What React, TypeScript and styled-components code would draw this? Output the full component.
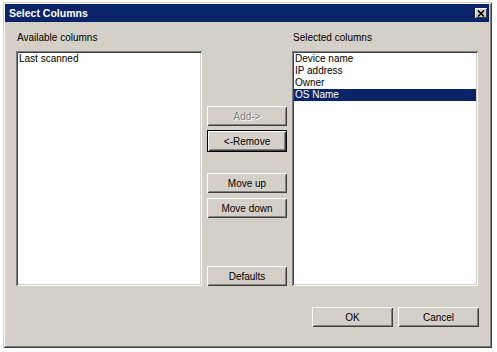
import React from "react";
import styled, { createGlobalStyle, css } from "styled-components";

const Global = createGlobalStyle`
  html, body { margin: 0; padding: 0; background: #ffffff; }
  body { font-family: "Liberation Sans", Arial, sans-serif; font-size: 10px; }
`;

const Window = styled.div`
  box-sizing: border-box;
  margin: 2px 0 0 3px;
  width: 489px;
  height: 346px;
  background: #d4d0c8;
  padding: 2px 3px 2px 2px;
  box-shadow: inset 1px 1px #d4d0c8, inset -1px -1px #404040,
    inset 2px 2px #ffffff, inset -2px -2px #808080;
  display: flex;
  flex-direction: column;
`;

const TitleBar = styled.div`
  height: 18px;
  background: #0a246a;
  display: flex;
  align-items: center;
  justify-content: space-between;
  padding: 0 2px 0 4px;
`;

const TitleText = styled.span`
  color: #ffffff;
  font-weight: bold;
  font-size: 10.5px;
`;

const CloseBtn = styled.div`
  width: 12px;
  height: 10px;
  background: #d4d0c8;
  box-shadow: inset 1px 1px #ffffff, inset -1px -1px #404040;
  display: flex;
  align-items: center;
  justify-content: center;
`;

const Body = styled.div`
  flex: 1;
  display: flex;
  flex-direction: column;
  padding: 10px 10px 18px 11px;
`;

const Columns = styled.div`
  display: grid;
  grid-template-columns: 186px 80px 186px;
  column-gap: 5px;
  grid-template-rows: 12px 235px;
  row-gap: 7px;
`;

const Label = styled.div`
  line-height: 12px;
  color: #000;
  padding-left: 1px;
`;

const ListBox = styled.div`
  background: #ffffff;
  box-shadow: inset 1px 1px #808080, inset -1px -1px #ffffff,
    inset 2px 2px #404040, inset -2px -2px #d4d0c8;
  padding: 2px;
`;

const Item = styled.div<{ $selected?: boolean }>`
  height: 12px;
  line-height: 12px;
  padding-left: 1px;
  color: #000;
  ${(p) =>
    p.$selected &&
    css`
      background: #0a246a;
      color: #ffffff;
    `}
`;

const ButtonCol = styled.div`
  display: flex;
  flex-direction: column;
  padding-top: 55px;
`;

const Button = styled.div<{ $disabled?: boolean; $default?: boolean; $gap?: number }>`
  box-sizing: border-box;
  width: 80px;
  height: 20px;
  display: flex;
  align-items: center;
  justify-content: center;
  background: #d4d0c8;
  color: #000;
  margin-top: ${(p) => p.$gap ?? 0}px;
  box-shadow: inset 1px 1px #ffffff, inset -1px -1px #404040,
    inset 2px 2px #d4d0c8, inset -2px -2px #808080;
  ${(p) =>
    p.$disabled &&
    css`
      color: #808080;
      text-shadow: 1px 1px #ffffff;
    `}
  ${(p) =>
    p.$default &&
    css`
      height: 22px;
      border: 1px solid #000;
      box-shadow: inset 1px 1px #ffffff, inset -1px -1px #404040,
        inset 2px 2px #d4d0c8, inset -2px -2px #808080;
    `}
`;

const DefaultsButton = styled(Button)`
  margin-top: auto;
`;

const Footer = styled.div`
  margin-top: 21px;
  display: flex;
  justify-content: flex-end;
  gap: 5px;
  padding-right: 0px;
`;

const FooterButton = styled(Button)`
  width: 81px;
`;

export default function App() {
  return (
    <>
      <Global />
      <Window>
        <TitleBar>
          <TitleText>Select Columns</TitleText>
          <CloseBtn>
            <svg width="8" height="7" viewBox="0 0 8 7">
              <path d="M1 0.5 L7 6.5 M7 0.5 L1 6.5" stroke="#000" strokeWidth="1.6" />
            </svg>
          </CloseBtn>
        </TitleBar>
        <Body>
          <Columns>
            <Label>Available columns</Label>
            <div />
            <Label>Selected columns</Label>
            <ListBox>
              <Item>Last scanned</Item>
            </ListBox>
            <ButtonCol>
              <Button $disabled>Add-&gt;</Button>
              <Button $default $gap={4}>&lt;-Remove</Button>
              <Button $gap={21}>Move up</Button>
              <Button $gap={5}>Move down</Button>
              <DefaultsButton>Defaults</DefaultsButton>
            </ButtonCol>
            <ListBox>
              <Item>Device name</Item>
              <Item>IP address</Item>
              <Item>Owner</Item>
              <Item $selected>OS Name</Item>
            </ListBox>
          </Columns>
          <Footer>
            <FooterButton>OK</FooterButton>
            <FooterButton>Cancel</FooterButton>
          </Footer>
        </Body>
      </Window>
    </>
  );
}
